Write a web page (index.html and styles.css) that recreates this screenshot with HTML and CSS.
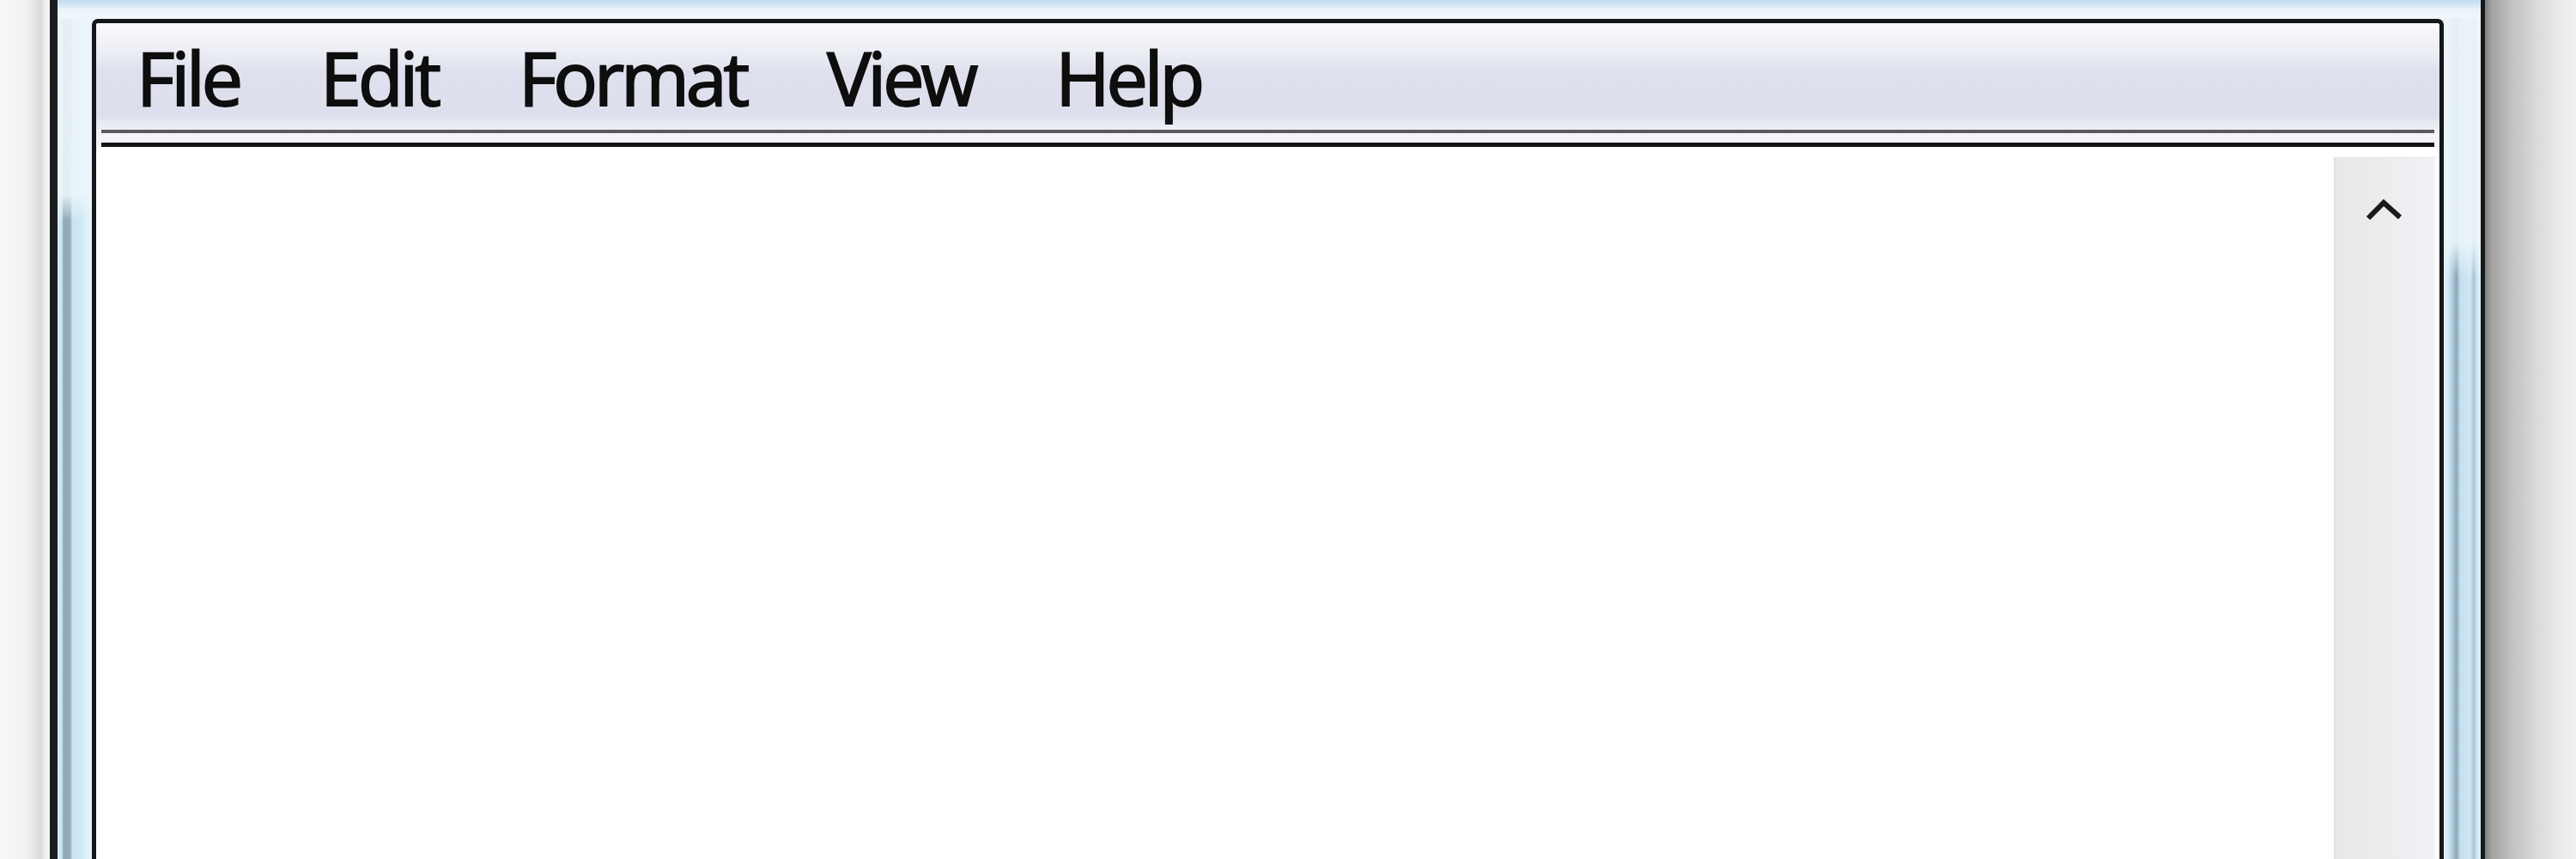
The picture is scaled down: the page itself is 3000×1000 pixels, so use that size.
FILE: index.html
```html
<!DOCTYPE html>
<html lang="en">
<head>
<meta charset="utf-8">
<title>Untitled - Notepad</title>
<link rel="stylesheet" href="styles.css">
</head>
<body>
<div class="desktop">
  <div class="shadow-left"></div>
  <div class="frame">
    <div class="frame-top"></div>
    <div class="frame-side frame-side-left"></div>
    <div class="window">
      <nav class="menubar">
        <span class="menu-item">File</span>
        <span class="menu-item">Edit</span>
        <span class="menu-item">Format</span>
        <span class="menu-item">View</span>
        <span class="menu-item">Help</span>
      </nav>
      <div class="menu-rule">
        <div class="rule-gray"></div>
        <div class="rule-gap"></div>
        <div class="rule-dark"></div>
      </div>
      <div class="content">
        <div class="editor"></div>
        <div class="scrollbar">
          <div class="scroll-up">
            <svg class="chevron" width="46" height="26" viewBox="0 0 46 26">
              <polyline points="4,23 22,5 41,22" fill="none" stroke="#1a1a1a" stroke-width="6" stroke-linejoin="miter"/>
            </svg>
          </div>
        </div>
      </div>
    </div>
    <div class="frame-side frame-side-right"></div>
  </div>
  <div class="shadow-right"></div>
</div>
</body>
</html>
```

FILE: styles.css
```css
html, body {
  margin: 0;
  padding: 0;
}

body {
  width: 3000px;
  height: 1000px;
  overflow: hidden;
  font-family: "Open Sans", "Noto Sans", "Liberation Sans", sans-serif;
}

.desktop {
  display: flex;
  height: 1000px;
}

.shadow-left {
  width: 58px;
  flex: none;
  background: linear-gradient(to right, #f8f8f8 0px, #f2f2f2 30px, #e3e3e3 42px, #dadada 47px, #eeeeee 52px, #f6f6f6 58px);
}

.shadow-right {
  flex: 1;
  background: linear-gradient(to right, #7f7f7f 0px, #a3a3a3 8px, #c2c0c2 30px, #dadada 60px, #e9e9e9 85px, #f1f1f1 107px);
}

.frame {
  width: 2822px;
  flex: none;
  border-left: 9px solid #1a1e21;
  border-right: 5px solid #15181a;
  display: grid;
  grid-template-columns: 40px 1fr 43px;
  grid-template-rows: 22px 1fr;
  background: #e6f1f8;
}

.frame-top {
  grid-column: 1 / 4;
  background: linear-gradient(to bottom, #c4dcee 0px, #d3e6f3 6px, #eaf4fa 11px, #f1f7fb 20px, #e9f2f8 22px);
}

.frame-side-left {
  background:
    linear-gradient(to bottom, rgba(236, 245, 250, 0.92) 0px, rgba(236, 245, 250, 0.9) 205px, rgba(236, 245, 250, 0) 235px),
    linear-gradient(to right, #dcedf6 0px, #c9e3f1 5px, #8fa9b9 7px, #93adbd 15px, #c9e5f3 17px, #cfe8f5 28px, #ddeff8 32px, #e4f2f9 40px);
}

.frame-side-right {
  background:
    linear-gradient(to bottom, rgba(236, 245, 250, 0.92) 0px, rgba(236, 245, 250, 0.9) 260px, rgba(236, 245, 250, 0) 300px),
    linear-gradient(to right, #e2f1f9 0px, #d2eaf6 5px, #b5d2e3 9px, #8ca6b7 15px, #c4dfee 19px, #d0e8f5 31px, #a9c2d2 35px, #c8e2f0 38px, #e3f1f8 43px);
}

.window {
  display: flex;
  flex-direction: column;
  background: #ffffff;
  border: 5px solid #141618;
  border-bottom: none;
  border-radius: 7px 7px 0 0;
  min-width: 0;
}

.menubar {
  height: 124px;
  display: flex;
  align-items: center;
  gap: 94px;
  padding: 2px 0 0 47px;
  box-sizing: border-box;
  background: linear-gradient(to bottom, #fbfcfe 0px, #f6f7fb 8px, #eef0f6 28px, #e6e8f1 45px, #dee1ed 55px, #dde0ec 108px, #e5e8f0 114px, #eef0f6 124px);
  border-radius: 3px 3px 0 0;
}

.menu-item {
  font-size: 86px;
  font-weight: 400;
  line-height: 118px;
  color: #0e0e0e;
  letter-spacing: -4px;
  -webkit-text-stroke: 2px #0e0e0e;
}

.menu-rule {
  display: flex;
  flex-direction: column;
  padding: 0 6px;
  background: #f3f5f9;
}

.rule-gray {
  height: 4px;
  background: #5a5c60;
}

.rule-gap {
  height: 11px;
  background: #f2f4f8;
}

.rule-dark {
  height: 5px;
  background: #121314;
}

.content {
  flex: 1;
  display: flex;
  background: #ffffff;
}

.editor {
  flex: 1;
}

.scrollbar {
  width: 118px;
  margin: 12px 5px 0 0;
  background: linear-gradient(to right, #dedede 0px, #e9e9e9 4px, #ececec 50px, #eeeff2 95px, #f1f3f6 118px);
  border-top: 1px solid #e4e4e4;
}

.scroll-up {
  display: flex;
  justify-content: center;
  padding-top: 47px;
}

.chevron {
  display: block;
}
```
